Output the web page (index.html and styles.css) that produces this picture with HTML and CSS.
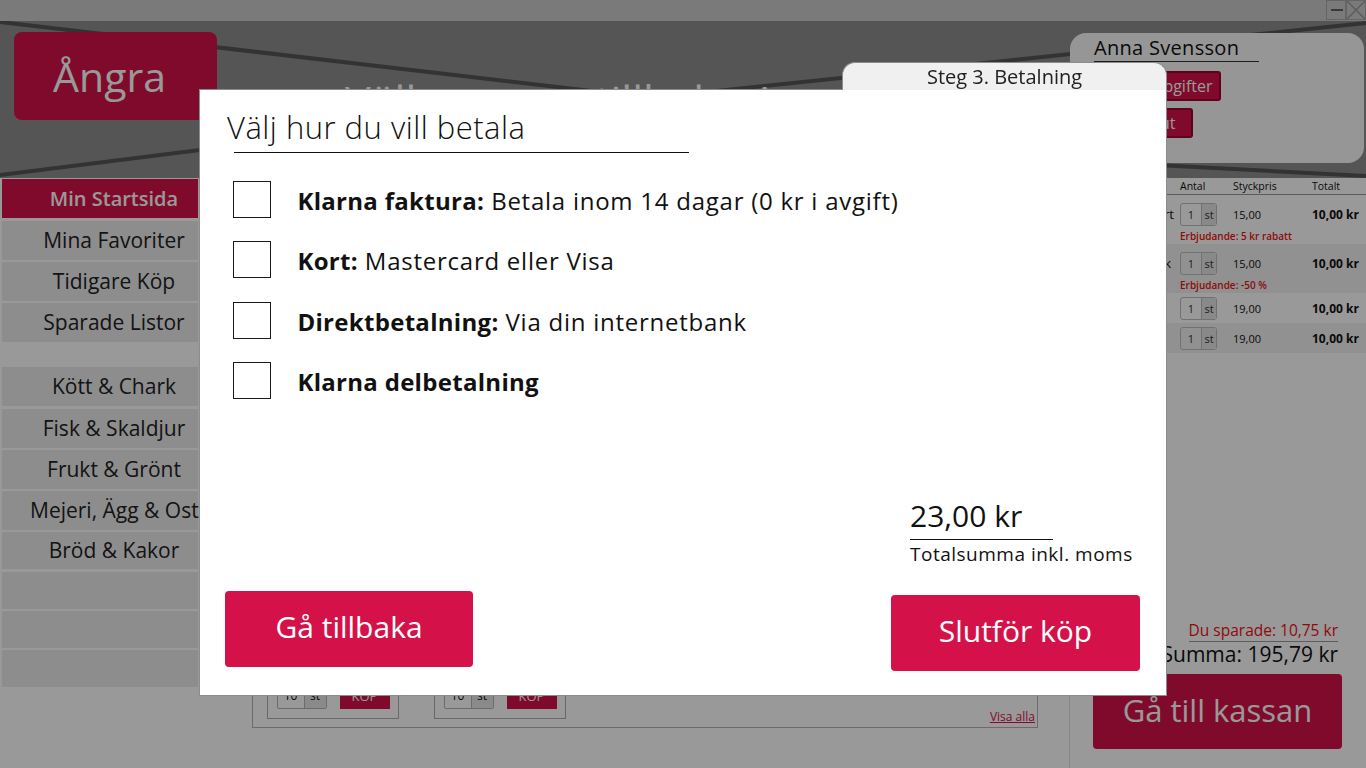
FILE: index.html
```html
<!DOCTYPE html>
<html lang="sv">
<head>
<meta charset="utf-8">
<title>Betalning</title>
<link rel="stylesheet" href="styles.css">
</head>
<body>
<div class="app">
  <div class="titlebar">
    <span class="winbtn"><svg width="18" height="18" viewBox="0 0 18 18"><line x1="4" y1="9" x2="16" y2="9" stroke="#606060" stroke-width="2"/></svg></span>
    <span class="winbtn"><svg width="18" height="18" viewBox="0 0 18 18"><path d="M0 0 L18 18 M18 0 L0 18" stroke="#9a9a9a" stroke-width="1.4"/></svg></span>
  </div>
  <header class="header">
    <svg class="header-bg" width="1366" height="157" viewBox="0 0 1366 157">
      <g stroke="#555" stroke-width="4" fill="none">
        <line x1="0" y1="1" x2="660" y2="78"/>
        <line x1="640" y1="78" x2="1366" y2="2"/>
        <line x1="0" y1="154" x2="640" y2="74"/>
        <line x1="1080" y1="140" x2="1366" y2="155"/>
      </g>
    </svg>
    <button class="undo">Ångra</button>
    <h1 class="welcome">Välkommen tillbaka Anna!</h1>
    <div class="user-panel">
      <div class="user-name">Anna Svensson</div>
      <button class="user-btn">Mina uppgifter</button>
      <button class="user-btn narrow">Logga ut</button>
    </div>
  </header>
  <div class="main">
    <nav class="sidebar">
      <div class="nav-item active">Min Startsida</div>
      <div class="nav-item">Mina Favoriter</div>
      <div class="nav-item">Tidigare Köp</div>
      <div class="nav-item">Sparade Listor</div>
      <div class="nav-gap"></div>
      <div class="nav-item">Kött &amp; Chark</div>
      <div class="nav-item">Fisk &amp; Skaldjur</div>
      <div class="nav-item">Frukt &amp; Grönt</div>
      <div class="nav-item">Mejeri, Ägg &amp; Ost</div>
      <div class="nav-item short">Bröd &amp; Kakor</div>
      <div class="nav-item short"></div>
      <div class="nav-item short"></div>
      <div class="nav-item short"></div>
    </nav>
    <main class="content">
      <section class="offers">
        <h2 class="offers-title">Veckans erbjudanden</h2>
        <div class="offers-row">
          <div class="card">
            <div class="card-img"></div>
            <div class="card-name">Kycklingfilé</div>
            <div class="card-price">89,00 kr</div>
            <div class="buy">
              <div class="qty-sm"><span>10</span><span>st</span></div>
              <button class="buy-btn">KÖP</button>
            </div>
          </div>
          <div class="card">
            <div class="card-img"></div>
            <div class="card-name">Laxfilé</div>
            <div class="card-price">69,00 kr</div>
            <div class="buy">
              <div class="qty-sm"><span>10</span><span>st</span></div>
              <button class="buy-btn">KÖP</button>
            </div>
          </div>
          <a class="see-all">Visa alla</a>
        </div>
      </section>
    </main>
    <aside class="cart">
      <div class="cart-table">
        <div class="cart-head">
          <span></span><span>Antal</span><span>Styckpris</span><span>Totalt</span>
        </div>
        <div class="cart-row has-offer">
          <span class="item-name">Grekisk yoghurt</span>
          <span class="qty"><span class="n">1</span><span class="u">st</span></span>
          <span class="price">15,00</span>
          <span class="line-total">10,00 kr</span>
          <span class="offer">Erbjudande: 5 kr rabatt</span>
        </div>
        <div class="cart-row has-offer alt">
          <span class="item-name">Ekologisk mjölk</span>
          <span class="qty"><span class="n">1</span><span class="u">st</span></span>
          <span class="price">15,00</span>
          <span class="line-total">10,00 kr</span>
          <span class="offer">Erbjudande: -50 %</span>
        </div>
        <div class="cart-row">
          <span class="item-name">Smör</span>
          <span class="qty"><span class="n">1</span><span class="u">st</span></span>
          <span class="price">19,00</span>
          <span class="line-total">10,00 kr</span>
        </div>
        <div class="cart-row alt">
          <span class="item-name">Ost</span>
          <span class="qty"><span class="n">1</span><span class="u">st</span></span>
          <span class="price">19,00</span>
          <span class="line-total">10,00 kr</span>
        </div>
      </div>
      <div class="cart-foot">
        <div class="saved">Du sparade: 10,75 kr</div>
        <div class="sum">Summa: 195,79 kr</div>
        <button class="checkout">Gå till kassan</button>
      </div>
    </aside>
  </div>
</div>
<div class="overlay"></div>
<div class="modal">
  <div class="modal-tab">Steg 3. Betalning</div>
  <h2 class="modal-title">Välj hur du vill betala</h2>
  <hr class="modal-rule">
  <ul class="pay-options">
    <li class="pay-option"><span class="check"></span><span class="pay-label"><b>Klarna faktura:</b> Betala inom 14 dagar (0 kr i avgift)</span></li>
    <li class="pay-option"><span class="check"></span><span class="pay-label"><b>Kort:</b> Mastercard eller Visa</span></li>
    <li class="pay-option"><span class="check"></span><span class="pay-label"><b>Direktbetalning:</b> Via din internetbank</span></li>
    <li class="pay-option"><span class="check"></span><span class="pay-label"><b>Klarna delbetalning</b></span></li>
  </ul>
  <div class="total">
    <div class="total-amount">23,00 kr</div>
    <div class="total-label">Totalsumma inkl. moms</div>
  </div>
  <div class="modal-actions">
    <button class="btn btn-back">Gå tillbaka</button>
    <button class="btn btn-finish">Slutför köp</button>
  </div>
</div>
</body>
</html>
```
FILE: styles.css
```css
* { box-sizing: border-box; }
html, body { margin: 0; height: 100%; }
body {
  font-family: "Open Sans", "Noto Sans", "DejaVu Sans", sans-serif;
  background: #fff;
  color: #111;
  overflow: hidden;
}
button { font-family: inherit; }

.app { display: flex; flex-direction: column; height: 100vh; }

/* title bar */
.titlebar {
  height: 21px;
  flex: none;
  background: #cbcbcb;
  display: flex;
  justify-content: flex-end;
}
.winbtn {
  width: 20px;
  height: 20px;
  border: 1px solid #a8a8a8;
  display: block;
}
.winbtn svg { display: block; }

/* header */
.header {
  height: 157px;
  flex: none;
  background: #8e8e8e;
  display: flex;
  align-items: flex-start;
  position: relative;
  isolation: isolate;
}
.header-bg { position: absolute; left: 0; top: 0; z-index: -1; }
.undo {
  flex: none;
  margin: 11px 0 0 14px;
  width: 203px;
  height: 88px;
  padding: 0 12px 0 0;
  background: #d41249;
  border: none;
  border-radius: 8px;
  color: #fff;
  font-size: 41px;
}
.welcome {
  flex: 1;
  margin: 55px 0 0 128px;
  font-size: 43px;
  font-weight: 400;
  line-height: 52px;
  color: #fff;
  white-space: nowrap;
  overflow: hidden;
}
.user-panel {
  flex: none;
  margin: 12px 2px 0 0;
  width: 294px;
  height: 130px;
  background: #fbfbfb;
  border-radius: 16px;
  padding: 3px 0 0 24px;
  display: flex;
  flex-direction: column;
  align-items: flex-start;
}
.user-name {
  width: 165px;
  font-size: 20px;
  line-height: 24px;
  padding-bottom: 1px;
  border-bottom: 1px solid #333;
  color: #111;
  letter-spacing: 0.3px;
}
.user-btn {
  margin-top: 9px;
  width: 127px;
  height: 30px;
  padding: 0;
  background: #d41249;
  border: 2px solid #a3002f;
  border-radius: 3px;
  color: #fff;
  font-size: 16px;
}
.user-btn.narrow { width: 99px; margin-top: 7px; }

/* main row */
.main { flex: 1; display: flex; min-height: 0; }

.sidebar {
  flex: none;
  width: 196px;
  margin-left: 2px;
  padding-top: 1.3px;
  display: flex;
  flex-direction: column;
  gap: 2.3px;
}
.nav-item {
  height: 39px;
  line-height: 39px;
  background: #ececec;
  color: #222;
  font-size: 21px;
  text-align: center;
  padding-left: 28px;
  white-space: nowrap;
}
.nav-item.active { background: #d41249; color: #fff; font-weight: 600; font-size: 20px; }
.nav-item.short { height: 37px; line-height: 37px; }
.nav-gap { height: 20.5px; }

.content { flex: 1; min-width: 0; padding: 20px 31px 0 54px; }
.offers {
  height: 530px;
  border: 1px solid #b3b3b3;
  display: flex;
  flex-direction: column;
}
.offers-title { margin: 0; padding: 10px 14px; font-size: 20px; font-weight: 600; }
.offers-row {
  margin-top: auto;
  display: flex;
  align-items: flex-end;
  gap: 35px;
  padding: 0 2px 0 14px;
}
.card {
  width: 132px;
  border: 1px solid #b0b0b0;
  margin-bottom: 8px;
  padding: 8px 8px 9px 8.5px;
}
.card-img { height: 110px; background: #f1f1f1; }
.card-name { font-size: 13px; margin-top: 6px; }
.card-price { font-size: 15px; font-weight: 700; margin: 2px 0 6px; }
.buy { display: flex; align-items: center; gap: 13px; }
.qty-sm {
  display: flex;
  height: 26px;
  border: 1px solid #b5b5b5;
  border-radius: 2px;
  font-size: 12px;
  line-height: 24px;
}
.qty-sm span:first-child { width: 26px; text-align: center; }
.qty-sm span:last-child { width: 22px; text-align: center; background: #e6e6e6; border-left: 1px solid #b5b5b5; }
.buy-btn {
  width: 50px;
  height: 26px;
  padding: 0;
  background: #d41249;
  color: #fff;
  border: none;
  font-size: 13px;
}
.see-all {
  margin-left: auto;
  margin-bottom: 3px;
  font-size: 12px;
  line-height: 14px;
  color: #d41249;
  text-decoration: underline;
}

/* cart */
.cart {
  flex: none;
  width: 297px;
  border-left: 1px solid #e2e2e2;
  display: flex;
  flex-direction: column;
  justify-content: space-between;
}
.cart-head, .cart-row {
  display: grid;
  grid-template-columns: 110px 53px 79px 1fr;
}
.cart-head {
  height: 17px;
  line-height: 16px;
  font-size: 10.5px;
  border-bottom: 1px solid #9a9a9a;
  color: #111;
}
.cart-row { grid-template-rows: 30px; align-items: center; }
.cart-row.has-offer { padding-top: 4px; grid-template-rows: 30px 15px; }
.cart-row.alt { background: #f2f2f2; }
.item-name { padding-left: 8px; font-size: 13px; white-space: nowrap; }
.qty {
  display: flex;
  width: 37px;
  height: 23px;
  border: 1px solid #bdbdbd;
  border-radius: 3px;
  font-size: 11px;
  line-height: 21px;
  color: #333;
}
.qty .n { width: 20px; text-align: center; }
.qty .u { flex: 1; text-align: center; background: #e4e4e4; border-left: 1px solid #bdbdbd; }
.price { font-size: 11px; }
.line-total { font-size: 12px; font-weight: 700; }
.offer {
  grid-column: 2 / -1;
  font-size: 10px;
  font-weight: 600;
  line-height: 15px;
  color: #ee1111;
  white-space: nowrap;
}
.cart-foot {
  display: flex;
  flex-direction: column;
  align-items: flex-end;
  padding-bottom: 19px;
}
.saved {
  margin-right: 28px;
  font-size: 15.5px;
  line-height: 18px;
  padding-bottom: 2px;
  border-bottom: 1px solid #9a9a9a;
  color: #ee1111;
}
.sum { margin-right: 28px; font-size: 21px; line-height: 24px; color: #111; }
.checkout {
  margin: 8px 24px 0 0;
  width: 249px;
  height: 75px;
  padding: 0 0 4px;
  background: #d41249;
  border: none;
  border-radius: 4px;
  color: #fff;
  font-size: 31px;
}

/* modal */
.overlay { position: fixed; inset: 0; background: rgba(0, 0, 0, 0.4); }
.modal {
  position: fixed;
  left: 199px;
  top: 89px;
  width: 968px;
  height: 607px;
  background: #fff;
  border: 1px solid #8c8c8c;
  display: flex;
  flex-direction: column;
  color: #111;
}
.modal-tab {
  position: absolute;
  right: -1px;
  bottom: 100%;
  width: 325px;
  height: 28px;
  padding-top: 1px;
  background: #f0f0f0;
  border: 1px solid #8c8c8c;
  border-bottom: none;
  border-radius: 13px 13px 0 0;
  text-align: center;
  font-size: 20px;
  line-height: 26px;
  color: #222;
}
.modal-title {
  margin: 19.4px 0 0 27px;
  font-size: 31px;
  line-height: 36px;
  font-weight: 300;
  letter-spacing: 0.5px;
}
.modal-rule {
  margin: 6.6px 0 0 34px;
  width: 455px;
  height: 0;
  border: none;
  border-top: 1px solid #111;
}
.pay-options {
  list-style: none;
  margin: 27.7px 0 0 33px;
  padding: 0;
  display: flex;
  flex-direction: column;
  gap: 22.5px;
}
.pay-option { display: flex; align-items: flex-start; height: 38px; }
.check { flex: none; width: 38.4px; height: 37px; border: 1px solid #1a1a1a; }
.pay-label {
  margin: 5px 0 0 26px;
  font-size: 24px;
  line-height: 30px;
  letter-spacing: 0.75px;
  white-space: nowrap;
}
.pay-label b { font-weight: 700; letter-spacing: 0.3px; }
.total { margin: auto 0 0 710px; }
.total-amount {
  width: 143px;
  font-size: 30px;
  line-height: 36px;
  padding-bottom: 5px;
  border-bottom: 1px solid #111;
}
.total-label { margin-top: 3.3px; font-size: 19px; line-height: 22px; letter-spacing: 0.5px; }
.modal-actions {
  margin-top: 25.7px;
  display: flex;
  justify-content: space-between;
  align-items: flex-start;
  padding: 0 26px 24px 25px;
}
.btn {
  background: #d41249;
  color: #fff;
  border: none;
  border-radius: 4px;
  font-size: 30px;
  padding: 0 0 5px;
}
.btn-back { width: 248px; height: 76px; }
.btn-finish { width: 249px; height: 76px; margin-top: 4px; }
```
